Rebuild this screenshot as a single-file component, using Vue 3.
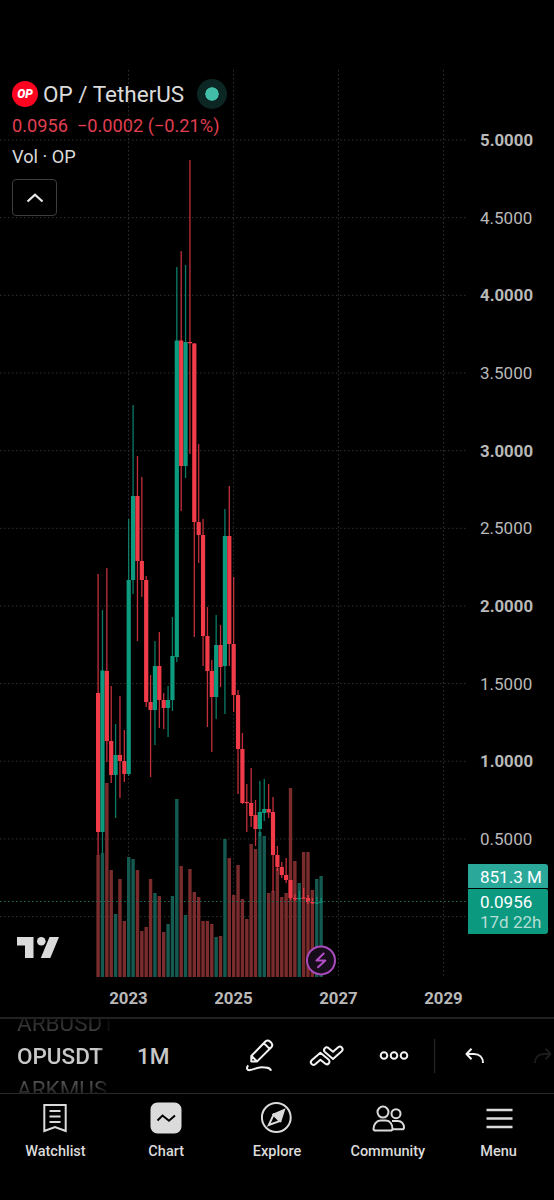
<template>
  <div class="screen">
    <section class="chart">
      <svg class="plot" width="554" height="1017" viewBox="0 0 554 1017">
        <!-- grid -->
        <g class="grid">
          <line v-for="(tick, i) in priceTicks" :key="tick" x1="0" :y1="gridY(i)" x2="467" :y2="gridY(i)" />
          <line v-for="(year, i) in years" :key="year" :x1="128.5 + i * 105" y1="70" :x2="128.5 + i * 105" y2="977" />
        </g>
        <!-- volume -->
        <rect
          v-for="(c, i) in candles"
          :key="'v' + i"
          :class="c[0] === 'g' ? 'vol-up' : 'vol-down'"
          :x="barX(i) - 1.7"
          :y="c[5]"
          width="3.4"
          :height="977 - c[5]"
        />
        <!-- candles -->
        <g v-for="(c, i) in candles" :key="'c' + i" :class="c[0] === 'g' ? 'up' : 'down'">
          <rect class="wick" :x="barX(i) - 0.65" :y="c[3]" width="1.3" :height="c[4] - c[3]" />
          <rect :x="barX(i) - 2.1" :y="c[1]" width="4.2" :height="c[2] - c[1]" />
        </g>
        <line class="price-line" x1="0" y1="901.5" x2="467" y2="901.5" />
        <!-- scales -->
        <text
          v-for="(tick, i) in priceTicks.slice(0, 10)"
          :key="'t' + tick"
          class="tick"
          :class="{ strong: i % 2 === 0 }"
          x="480"
          :y="gridY(i) + 6"
        >{{ tick }}</text>
        <text
          v-for="(year, i) in years"
          :key="'y' + year"
          class="tick strong"
          text-anchor="middle"
          :x="128.5 + i * 105"
          y="1004"
        >{{ year }}</text>
        <!-- TradingView mark -->
        <g class="mark">
          <path d="M17 937H33.5V958H25V945.5H17Z" />
          <circle cx="41.3" cy="941.3" r="4.3" />
          <path d="M49.5 937H59L50.3 958H40.8Z" />
        </g>
        <!-- event marker -->
        <circle class="event" cx="321" cy="960.4" r="14" />
        <path class="bolt" d="M323.7 953.5 L316.5 960.5 H325.3 L318 967.3" />
      </svg>

      <div class="legend">
        <div class="title">
          <span class="coin"><span>OP</span></span>
          <span class="name">OP / TetherUS</span>
          <span class="status"></span>
        </div>
        <div class="change"><span>0.0956</span><span>−0.0002 (−0.21%)</span></div>
        <div class="volume">Vol · OP</div>
        <button class="collapse">
          <svg width="18" height="10" viewBox="0 0 18 10"><path d="M1.500 8.500 9 1.700l7.500 6.800" /></svg>
        </button>
      </div>

      <div class="labels">
        <div class="label vol-label">851.3 M</div>
        <div class="label price-label">
          <div>0.0956</div>
          <div class="countdown">17d 22h</div>
        </div>
      </div>
    </section>

    <section class="toolbar">
      <div class="symbols">
        <span class="prev">ARBUSDT</span>
        <span class="current">OPUSDT</span>
        <span class="next">ARKMUS</span>
      </div>
      <span class="interval">1M</span>
      <svg class="tools" width="324" height="74" viewBox="230 1019 324 74">
        <!-- pencil -->
        <path d="M251.3 1056v5.6h5.6l14.4-14.3a3.4 3.4 0 0 0 0-4.5l-1.3-1.3a3.4 3.4 0 0 0-4.6 0zM251.8 1056.2l5 5M264 1043.3l5.6 5.6" />
        <path d="M248.2 1065.3c-2.2 2.7-1.2 5.3 1.8 4.8 4-.6 6.500-2.700 11.500-2.800 4.500 0 8.800 0 9.500 3.500" />
        <!-- indicators -->
        <path d="M311.700 1060.200 L320.400 1052.700 L328.500 1059.400 A2.700 2.700 0 0 1 325 1063.600 L320.400 1059.700 L315.200 1064.300 A2.700 2.700 0 0 1 311.700 1060.200Z" />
        <path d="M341.700 1051.300 L333 1058.900 L324.900 1052 A2.700 2.700 0 0 1 328.400 1047.900 L333 1051.800 L338.200 1047.200 A2.700 2.700 0 0 1 341.700 1051.300Z" />
        <!-- more -->
        <circle cx="384" cy="1055.500" r="3.300" />
        <circle cx="394" cy="1055.500" r="3.300" />
        <circle cx="404" cy="1055.500" r="3.300" />
        <line class="divider" x1="434.500" y1="1039" x2="434.500" y2="1073" />
        <!-- undo / redo -->
        <path d="M471.500 1048.700 466.500 1054l5 5.300M466.800 1054h7.200c5.500 0 9 3.500 9 9" />
        <path class="disabled" d="M545.500 1048.700 550.500 1054l-5 5.300M550.200 1054H544c-5.500 0-9 3.500-9 9" />
      </svg>
    </section>

    <nav class="tabs">
      <a class="tab">
        <svg width="32" height="32" viewBox="0 0 32 32">
          <path d="M5.300 3H26.700V29L16 25 5.300 29zM10.500 9h11M10.500 14.500h11M10.500 20h11" />
        </svg>
        <span>Watchlist</span>
      </a>
      <a class="tab">
        <svg width="32" height="32" viewBox="0 0 32 32">
          <rect class="solid" x="1.500" y="1.500" width="29" height="29" rx="6" />
          <path class="wave" d="M7.500 18.500 12.500 13.500 19 18.700 25 13.500" />
        </svg>
        <span>Chart</span>
      </a>
      <a class="tab">
        <svg width="32" height="32" viewBox="0 0 32 32">
          <circle cx="15.300" cy="15.500" r="14.400" />
          <path class="solid" d="M23 8 19.500 19 12.500 12.500z" />
          <path d="M12.500 12.800 7.800 23 18.700 19.100z" />
        </svg>
        <span>Explore</span>
      </a>
      <a class="tab">
        <svg width="34" height="32" viewBox="0 0 34 32">
          <circle cx="12" cy="10.100" r="5.500" />
          <circle cx="25" cy="11.700" r="4.500" />
          <path d="M9.500 18.500h5.500c4 0 6.500 4 6.500 8.200 0 1.300-.7 1.800-2 1.800H4.500c-1.500 0-2-.6-2-1.800 0-4.200 3-8.200 7-8.200z" />
          <path d="M21 18.900h6c3.500 0 6 3 6 6.500 0 1.300-.5 1.800-1.800 1.800h-9.500" />
        </svg>
        <span>Community</span>
      </a>
      <a class="tab">
        <svg width="32" height="32" viewBox="0 0 32 32">
          <path class="menu" d="M3.500 8h26M3.500 16.500h26M3.500 25h26" />
        </svg>
        <span>Menu</span>
      </a>
    </nav>
  </div>
</template>

<script setup>
const priceTicks = [
  '5.0000', '4.5000', '4.0000', '3.5000', '3.0000', '2.5000',
  '2.0000', '1.5000', '1.0000', '0.5000', '0.0000'
]
const years = ['2023', '2025', '2027', '2029']

const gridY = (i) => 140 + i * 77.66
const barX = (i) => 98.1 + i * 4.373

// [direction, body top, body bottom, high, low, volume top]
const candles = [
  ['r', 693, 832, 574, 855, 855],
  ['g', 670.5, 832, 610, 853, 853],
  ['r', 671, 741, 568, 762, 783],
  ['r', 741, 775, 686, 783, 870],
  ['g', 755, 775, 724, 818, 914],
  ['r', 755, 761, 696, 798, 879],
  ['r', 761, 774, 730, 782, 921],
  ['g', 580, 774, 519, 776, 857],
  ['g', 496, 580, 405, 594, 859],
  ['r', 496, 561, 456, 641, 870],
  ['r', 561, 580, 477, 597, 931],
  ['r', 580, 702, 576, 707, 927],
  ['r', 702, 710, 675, 777, 879],
  ['g', 666, 710, 641, 745, 893],
  ['r', 666, 700, 632, 728, 896],
  ['r', 700, 708, 693, 729, 932],
  ['g', 700, 708, 686, 737, 924],
  ['g', 656, 700, 617, 711, 896],
  ['g', 340.5, 657, 267, 662, 799],
  ['r', 340.5, 466, 251, 511, 866],
  ['g', 342, 466, 265, 478, 915],
  ['r', 342, 343.3, 160, 454, 869],
  ['r', 343.5, 522, 343, 637, 892],
  ['r', 522, 535, 444, 563, 897],
  ['r', 535, 636, 519, 666, 921],
  ['r', 636, 671, 607, 727, 921],
  ['r', 671, 697, 660, 752, 924],
  ['g', 645, 697, 615, 719, 937],
  ['r', 645, 667, 625, 687, 936],
  ['g', 536, 666, 509, 714, 839],
  ['r', 536, 644, 486, 666, 858],
  ['r', 644, 695, 577, 712, 895],
  ['r', 695, 749, 690, 794, 865],
  ['r', 749, 803, 733, 804, 899],
  ['r', 802, 803.2, 784, 832, 919],
  ['r', 803, 816, 768, 827, 844],
  ['r', 815, 829, 800, 846, 849],
  ['g', 812, 829, 781, 836, 832],
  ['g', 809, 813, 779, 821, 836],
  ['r', 809, 812.5, 784, 818, 893],
  ['r', 812, 855, 797, 892, 891],
  ['r', 855, 867, 846, 871, 868],
  ['r', 867, 875, 862, 878, 897],
  ['r', 875, 880, 858, 883, 893],
  ['r', 880, 898, 880, 900, 788],
  ['r', 898, 899.2, 894, 901, 861],
  ['g', 898, 899, 891, 901, 883],
  ['r', 897.5, 898.5, 888, 899, 852],
  ['r', 898, 902, 895, 904, 852],
  ['r', 902, 903.2, 898, 904, 890],
  ['g', 902.5, 903.5, 897, 904, 879],
  ['g', 901.5, 902.5, 898, 903, 876]
]
</script>

<style>
body {
  margin: 0;
  background: #000;
}
</style>

<style scoped>
.screen {
  width: 554px;
  height: 1200px;
  overflow: hidden;
  background: #000;
  color: #dbdbdb;
  font-family: Roboto, sans-serif;
}

.chart {
  position: relative;
  height: 1017px;
}

.plot {
  display: block;
}

.grid line {
  stroke: #303030;
  stroke-width: 1;
  stroke-dasharray: 1.5 2.5;
}

.price-line {
  stroke: #1d6d60;
  stroke-width: 1;
  stroke-dasharray: 1.5 2.5;
}

.vol-up { fill: #155a51; }
.vol-down { fill: #7a2c2d; }
.up { fill: #0d9b80; }
.down { fill: #f23b49; }
.wick { opacity: 0.8; }

.tick {
  fill: #b9b9b9;
  font-size: 17px;
}

.strong {
  font-size: 16.8px;
  font-weight: 700;
}

.mark { fill: #dbdbdb; }

.event {
  fill: #160c1a;
  stroke: #a94bbb;
  stroke-width: 2;
}

.bolt {
  fill: none;
  stroke: #b44fc8;
  stroke-width: 2;
  stroke-linejoin: round;
  stroke-linecap: round;
}

/* legend over the plot */
.legend {
  position: absolute;
  top: 78px;
  left: 12px;
}

.title {
  display: flex;
  align-items: center;
  height: 31px;
}

.coin {
  display: flex;
  align-items: center;
  justify-content: center;
  width: 26px;
  height: 26px;
  border-radius: 50%;
  background: #ff0420;
  color: #fff;
  font-size: 12px;
  font-style: italic;
  font-weight: 900;
}

.name {
  width: 150px;
  margin-left: 5px;
  font-size: 22.5px;
  line-height: 28px;
  white-space: nowrap;
}

.status {
  width: 14px;
  height: 14px;
  margin-left: 4px;
  border: 8px solid #0c2623;
  border-radius: 50%;
  background: #42bda8;
  background-clip: padding-box;
}

.change {
  display: flex;
  gap: 9px;
  height: 32px;
  color: #e13e51;
  font-size: 18.2px;
  line-height: 34px;
  white-space: nowrap;
}

.volume {
  height: 31px;
  font-size: 18.2px;
  line-height: 32px;
}

.collapse {
  display: flex;
  align-items: center;
  justify-content: center;
  box-sizing: border-box;
  width: 45px;
  height: 37px;
  margin-top: 7px;
  padding: 0;
  border: 1px solid #3d3d3d;
  border-radius: 4px;
  background: #000;
}

.collapse svg {
  fill: none;
  stroke: #e8e8e8;
  stroke-width: 2.2;
}

.labels {
  position: absolute;
  top: 864px;
  left: 468px;
  width: 80px;
}

.label {
  box-sizing: border-box;
  padding-left: 12px;
  color: #fff;
  font-size: 17px;
  white-space: nowrap;
}

.vol-label {
  height: 24px;
  margin-bottom: 1px;
  border-radius: 0 3px 0 0;
  background: #2aa99b;
  line-height: 26px;
}

.price-label {
  height: 45px;
  padding-top: 3px;
  border-radius: 0 2px 3px 0;
  background: #0b997f;
  line-height: 20px;
}

.countdown { color: #b5dfd6; }

.toolbar {
  display: flex;
  align-items: center;
  box-sizing: border-box;
  height: 77px;
  overflow: hidden;
  border-top: 2px solid #222;
  border-bottom: 1px solid #2a2a2a;
}

.symbols {
  display: flex;
  flex-direction: column;
  width: 94px;
  margin-left: 17px;
  font-size: 22.5px;
  line-height: 33px;
  mask-image: linear-gradient(90deg, #000 80px, transparent 96px);
}

.prev,
.next {
  background-clip: text;
  color: transparent;
}

.prev { background-image: linear-gradient(#1a1a1a 8px, #505050); }
.next { background-image: linear-gradient(#555 8px, #181818 24px); }

.current,
.interval {
  color: #c8c8c8;
  font-size: 22.5px;
  font-weight: 500;
}

.interval {
  width: 93px;
  margin-top: -1px;
  margin-left: 26px;
}

.tools {
  flex: none;
  fill: none;
  stroke: #f2f2f2;
  stroke-width: 2;
  stroke-linejoin: round;
}

.tools .divider {
  stroke: #262626;
  stroke-width: 1.2;
}

.tools .disabled { stroke: #1c1c1c; }

.tabs {
  display: flex;
  padding-top: 8px;
}

.tab {
  display: flex;
  flex: 1;
  flex-direction: column;
  align-items: center;
  font-size: 14.5px;
  font-weight: 500;
  line-height: 18px;
}

.tab svg {
  fill: none;
  stroke: #dbdbdb;
  stroke-width: 2;
}

.tab span { margin-top: 9px; }
.tab .solid { fill: #dbdbdb; }

.tab .wave {
  stroke: #000;
  stroke-width: 2;
}

.tab .menu { stroke-width: 2.5; }
</style>
